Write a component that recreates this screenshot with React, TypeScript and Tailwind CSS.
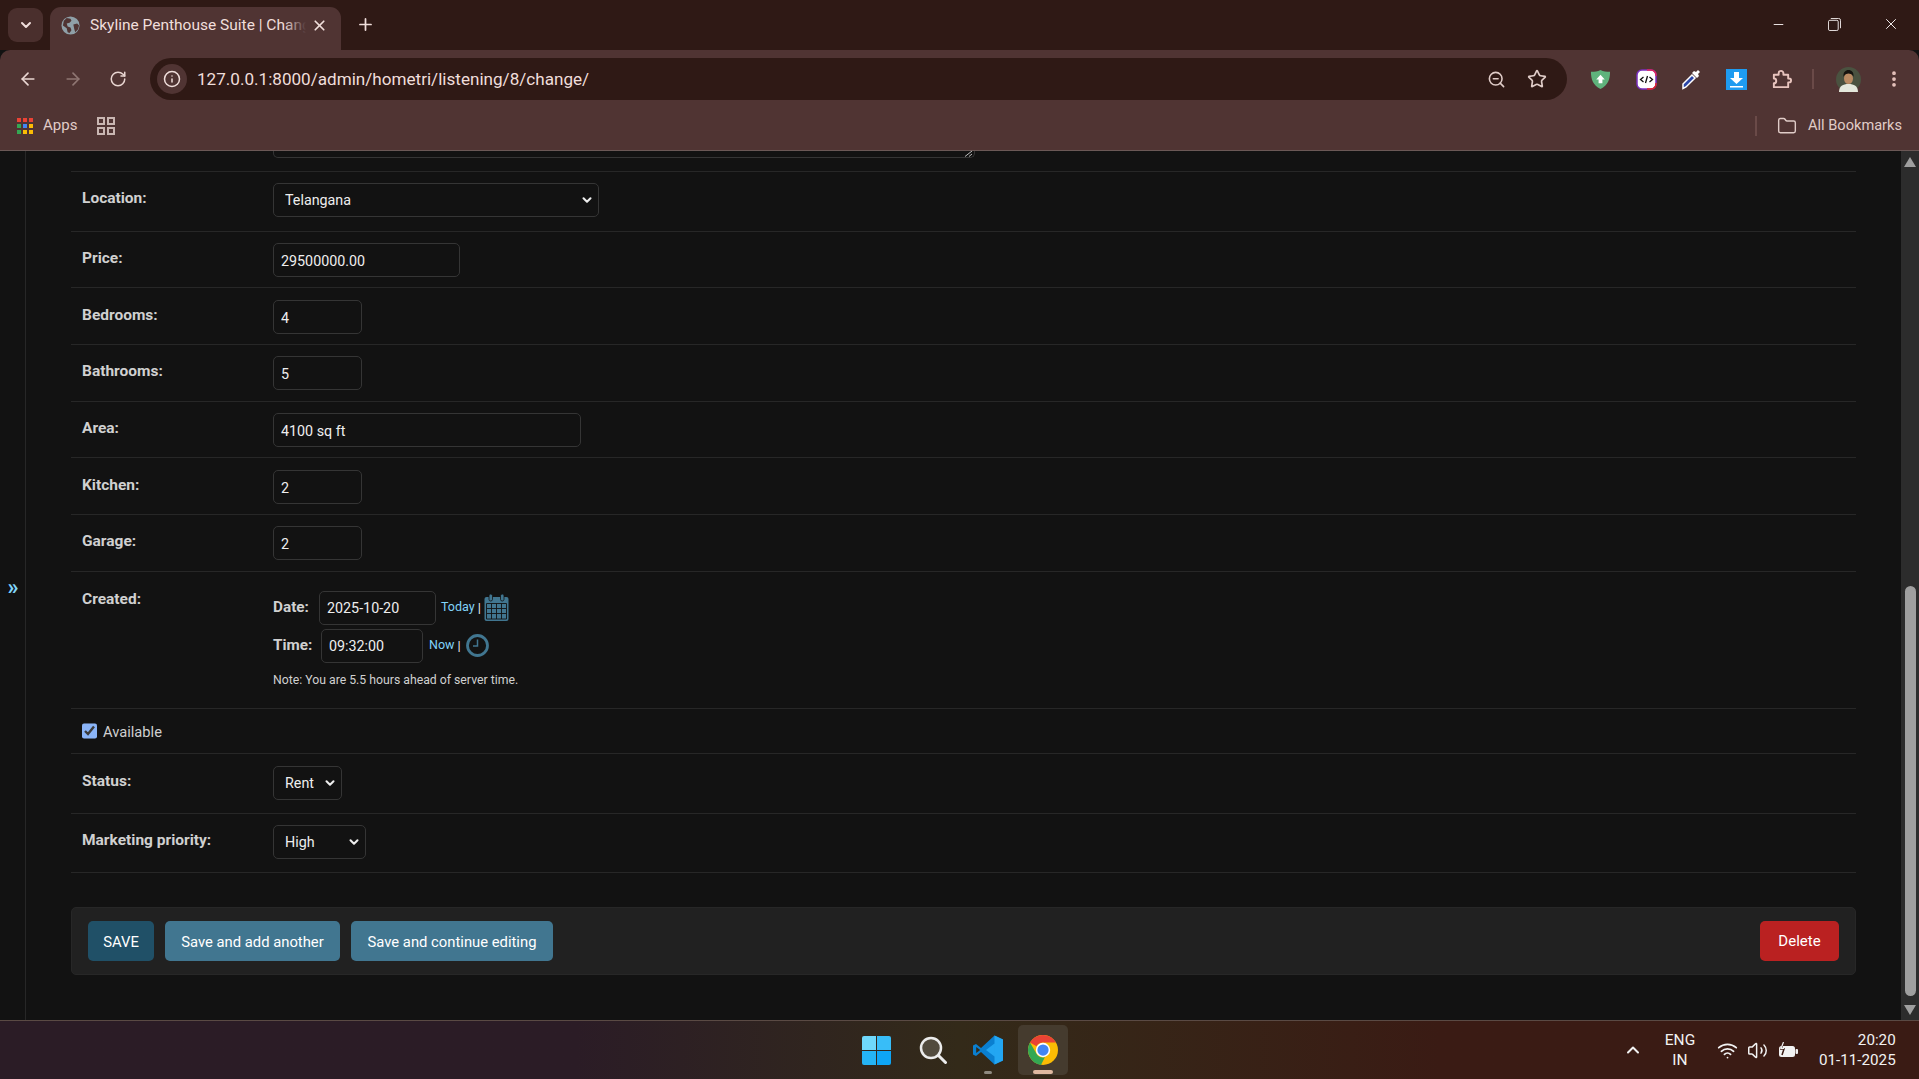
import { ChevronDown, ChevronUp, ArrowLeft, ArrowRight, RotateCw, Info, Star, ZoomOut, Plus, X, Minus, Folder, EllipsisVertical, Wifi, Volume2 } from 'lucide-react';

// --- Browser chrome icons ---
const Globe = () => (
    <svg viewBox="0 0 20 20" className="h-[19px] w-[19px] shrink-0">
        <circle cx="10" cy="10" r="9.5" fill="#8fa0a8" />
        <path d="M6 2l4 1 1 2-2 2-3 1 1 3 3 1 1 3-2 3-2-1-1-4-4-3 1-5zM13 9l4-1 2 2-1 4-3 3-1-3z" fill="#503433" />
    </svg>
);

const AppsGrid = () => {
    const colors = ['#ea4335', '#ea4335', '#ea4335', '#34a853', '#4285f4', '#fbbc04', '#34a853', '#fbbc04', '#fbbc04'];
    return (
        <div className="grid h-[16px] w-[16px] grid-cols-3 gap-[2px]">
            {colors.map((c, i) => (
                <svg key={i} viewBox="0 0 4 4"><rect width="4" height="4" fill={c} /></svg>
            ))}
        </div>
    );
};

const Squares = () => (
    <svg viewBox="0 0 18 18" className="h-[18px] w-[18px]" fill="none" stroke="#c9b6b2" strokeWidth="2">
        <rect x="1" y="1" width="6" height="6" />
        <rect x="11" y="1" width="6" height="6" />
        <rect x="1" y="11" width="6" height="6" />
        <rect x="11" y="11" width="6" height="6" />
    </svg>
);

const Restore = () => (
    <svg viewBox="0 0 14 14" className="h-[13px] w-[13px]" fill="none" stroke="#f4eeee" strokeWidth="1">
        <rect x="0.5" y="2.5" width="10.5" height="11" rx="1.5" />
        <path d="M3 .5h8.5a2 2 0 0 1 2 2V11" />
    </svg>
);

const Shield = () => (
    <svg viewBox="0 0 22 22" className="h-[21px] w-[21px]">
        <path d="M11 1c3 1.500 6 2 10 2 0 8-2 14-10 18C3 17 1 11 1 3c4 0 7-.5 10-2z" fill="#5fb37c" />
        <path d="M11 6l4.500 5H13v4H9v-4H6.500z" fill="#fff" />
    </svg>
);

const DevExt = () => (
    <svg viewBox="0 0 21 21" className="h-[21px] w-[21px]">
        <rect x="1" y="1" width="19" height="19" rx="5" fill="#fff" stroke="#7b2fbf" strokeWidth="1.500" />
        <path d="M11 1h4a5 5 0 0 1 5 5v1" fill="none" stroke="#e0245e" strokeWidth="1.500" />
        <path d="M20 14v1a5 5 0 0 1-5 5h-4" fill="none" stroke="#e02424" strokeWidth="1.500" />
        <path d="M7.500 8L4.500 10.500 7.500 13M13.500 8l3 2.500-3 2.500M11.500 7l-2 7" fill="none" stroke="#111" strokeWidth="1.300" />
    </svg>
);

const Dropper = () => (
    <svg viewBox="0 0 20 21" className="h-[21px] w-[20px]">
        <path d="M2 15L11 6l3 3-9 9-3 1.500z" fill="#2b46a8" stroke="#fff" strokeWidth="1.500" />
        <path d="M11 4l2-2 2 1 2-2 2 2-2 2 1 2-2 2z" fill="#fff" />
    </svg>
);

const DownloadExt = () => (
    <svg viewBox="0 0 21 21" className="h-[21px] w-[21px]">
        <rect width="21" height="21" fill="#1e9bf0" />
        <path d="M8 3h5v6h4l-6.500 6L4 9h4z" fill="#fff" />
        <rect x="4" y="17" width="13" height="1.500" fill="#fff" />
    </svg>
);

const PuzzleIcon = () => (
    <svg viewBox="0 0 22 22" className="h-[21px] w-[21px]" fill="none" stroke="#e8c4be" strokeWidth="2" strokeLinejoin="round">
        <path d="M3 6h5V4.500a2.500 2.500 0 0 1 5 0V6h5v4h1a2 2 0 0 1 0 4h-1v5H3v-4a2.500 2.500 0 0 0 0-5z" />
    </svg>
);

const Avatar = () => (
    <svg viewBox="0 0 25 25" className="h-[25px] w-[25px]">
        <circle cx="12.500" cy="12.500" r="12.500" fill="#4a5240" />
        <path d="M3 25c0-6 4-8 9.500-8s9.500 2 9.500 8z" fill="#e4e8dc" />
        <ellipse cx="12.500" cy="11.500" rx="4.500" ry="5.500" fill="#b98a62" />
        <path d="M7.500 10c-.5-5 2-7 5-7s5.500 2 5 7c-1-3-3-3.500-5-3.500S8.500 7 7.500 10z" fill="#15140f" />
    </svg>
);

// --- Django admin icons ---
const CalendarIcon = () => (
    <svg viewBox="0 0 25 27" className="h-[27px] w-[25px] shrink-0">
        <rect x="0.500" y="3" width="24" height="24" rx="2" fill="#417690" />
        <rect x="5" y="0" width="3.500" height="7" rx="1.700" fill="#417690" stroke="#121212" strokeWidth="0.800" />
        <rect x="16.500" y="0" width="3.500" height="7" rx="1.700" fill="#417690" stroke="#121212" strokeWidth="0.800" />
        <path d="M2.500 9.500h20v15.500h-20zM7.500 9.500v15.500M12.500 9.500v15.500M17.500 9.500v15.500M2.500 14.500h20M2.500 19.500h20" fill="none" stroke="#121212" strokeWidth="0.900" />
    </svg>
);

const ClockIcon = () => (
    <svg viewBox="0 0 23 23" className="h-[23px] w-[23px] shrink-0" fill="none">
        <circle cx="11.500" cy="11.500" r="10" stroke="#417690" strokeWidth="2.800" />
        <path d="M11.500 5.500v6.500H7" stroke="#417690" strokeWidth="1.500" />
    </svg>
);

// --- Taskbar icons ---
const WinLogo = () => (
    <div className="grid h-[29px] w-[29px] grid-cols-2 gap-[1px]">
        <div className="rounded-tl-[2px] bg-[#6fd8fb]" />
        <div className="rounded-tr-[2px] bg-[#38bdf8]" />
        <div className="rounded-bl-[2px] bg-[#25b4f5]" />
        <div className="rounded-br-[2px] bg-[#0ea5f5]" />
    </div>
);

const TaskSearch = () => (
    <svg viewBox="0 0 28 28" className="h-[28px] w-[28px]">
        <circle cx="12" cy="12" r="10" fill="#524b3e" stroke="#ececec" strokeWidth="2.500" />
        <path d="M19.500 19.500L26.500 26.500" stroke="#ececec" strokeWidth="3" strokeLinecap="round" />
    </svg>
);

const VsCode = () => (
    <svg viewBox="0 0 30 30" className="h-[30px] w-[30px]">
        <path d="M21.500 0.500L30 4.500v21l-8.500 4L8 17l-5 4-3-1.500V10.500L3 9l5 4z" fill="#0a7fd0" />
        <path d="M21.500 0.500L30 4.500v21l-8.500 4zM21.500 8.500L13 15l8.500 6.500z" fill="#23a6f2" fillRule="evenodd" />
        <path d="M3.200 12l4 3-4 3z" fill="#332a19" />
    </svg>
);

const ChromeLogo = () => (
    <svg viewBox="0 0 48 48" className="h-[30px] w-[30px]">
        <circle cx="24" cy="24" r="24" fill="#fbbc04" />
        <path d="M24 0a24 24 0 0 1 20.800 12H24a12 12 0 0 0-10.400 6L3.200 12A24 24 0 0 1 24 0z" fill="#ea4335" />
        <path d="M3.200 12l10.400 18A12 12 0 0 0 27 35.500L20.700 47.800A24 24 0 0 1 3.200 12z" fill="#34a853" />
        <circle cx="24" cy="24" r="11.500" fill="#fff" />
        <circle cx="24" cy="24" r="9" fill="#4285f4" />
    </svg>
);

const Battery = () => (
    <svg viewBox="0 0 21 16" className="h-[16px] w-[21px]" fill="none">
        <rect x="1" y="4" width="16" height="11" rx="2.500" fill="#f2f2f2" />
        <rect x="17.500" y="7" width="2.500" height="5" rx="1" fill="#f2f2f2" />
        <path d="M6 0L3 7h3L4 13" stroke="#3a1b14" strokeWidth="1.500" />
        <path d="M5.500 0L3 6.500h3" stroke="#f2f2f2" strokeWidth="1.200" />
    </svg>
);

// --- Form parts ---
const inputClass = "h-[34px] rounded-[5px] border border-[#353535] bg-[#121212] px-[7px] text-[14.300px] text-[#eeeeee] outline-none";

const Row = ({ label, className, children }: { label: string; className: string; children: React.ReactNode }) => (
    <div className={`flex items-start border-b border-[#272727] pl-[11px] ${className}`}>
        <label className="mt-[4px] w-[191px] shrink-0 text-[15.500px] leading-[22px] font-bold text-[#d0d0d0]">{label}</label>
        {children}
    </div>
);

const Select = ({ value, width }: { value: string; width: string }) => (
    <div className={`relative ${width}`}>
        <select defaultValue={value} className="h-[34px] w-full appearance-none rounded-[5px] border border-[#353535] bg-[#121212] pt-[2px] pl-[11px] text-[14.300px] text-[#eeeeee] outline-none">
            <option>{value}</option>
        </select>
        <ChevronDown size={14} strokeWidth={3.5} className="pointer-events-none absolute top-[10px] right-[5px] text-[#eeeeee]" />
    </div>
);

const fields = [
    { label: 'Price:', value: '29500000.00', width: 'w-[187px]' },
    { label: 'Bedrooms:', value: '4', width: 'w-[89px]' },
    { label: 'Bathrooms:', value: '5', width: 'w-[89px]' },
    { label: 'Area:', value: '4100 sq ft', width: 'w-[308px]' },
    { label: 'Kitchen:', value: '2', width: 'w-[89px]' },
    { label: 'Garage:', value: '2', width: 'w-[89px]' },
];

export default function App() {
    return (
        <div className="flex h-[1079px] w-[1919px] flex-col overflow-hidden bg-[#121212] font-['Roboto',sans-serif]">
            {/* Tab strip */}
            <div className="flex h-[50px] shrink-0 items-end bg-[#2f1915] pl-[8px]">
                <div className="mb-[8px] flex h-[34px] w-[35px] items-center justify-center rounded-[9px] bg-[#4a2f2d] text-[#f0dedb]">
                    <ChevronDown size={16} strokeWidth={3} />
                </div>
                <div className="ml-[7px] flex h-[43px] w-[291px] items-center rounded-t-[11px] bg-[#503433] pr-[6px] pb-[7px] pl-[11px]">
                    <Globe />
                    <div className="relative ml-[10px] w-[216px] overflow-hidden pt-[2px]">
                        <div className="text-[15.500px] whitespace-nowrap text-[#f0dedb]">Skyline Penthouse Suite | Change listening</div>
                        <div className="absolute inset-y-0 right-0 w-[22px] bg-linear-to-r from-transparent to-[#503433]" />
                    </div>
                    <X size={17} strokeWidth={2.4} className="ml-[5px] text-[#f0dedb]" />
                </div>
                <div className="mb-[16px] ml-[15px] text-[#f0dedb]"><Plus size={19} strokeWidth={2.2} /></div>
                <div className="mb-[17px] ml-auto flex items-center gap-[41px] pr-[19px] text-[#f4eeee]">
                    <Minus size={15} strokeWidth={1.5} className="mr-[1px]" />
                    <Restore />
                    <X size={18} strokeWidth={1.3} />
                </div>
            </div>

            {/* Toolbar */}
            <div className="flex h-[58px] shrink-0 items-center rounded-t-[10px] bg-[#503433] pl-[18px]">
                <ArrowLeft size={20} strokeWidth={2} className="text-[#e9d6d2]" />
                <ArrowRight size={20} strokeWidth={2} className="ml-[25px] text-[#8f7673]" />
                <RotateCw size={18} strokeWidth={2} className="ml-[26px] text-[#e9d6d2]" />
                <div className="ml-[23px] flex h-[42px] w-[1417px] items-center rounded-full bg-[#2f1915] pr-[20px] pl-[7px]">
                    <div className="flex h-[30px] w-[30px] items-center justify-center rounded-full bg-[#503433]">
                        <Info size={18} strokeWidth={2} className="text-[#f0dedb]" />
                    </div>
                    <span className="ml-[10px] pt-[2px] text-[17.100px] text-[#f0dedb]">127.0.0.1:8000/admin/hometri/listening/8/change/</span>
                    <ZoomOut size={19} strokeWidth={2} className="ml-auto text-[#e0ccc8]" />
                    <Star size={20} strokeWidth={2} className="ml-[21px] text-[#e0ccc8]" />
                </div>
                <div className="ml-[23px] flex items-center gap-[24.500px]">
                    <Shield />
                    <DevExt />
                    <Dropper />
                    <DownloadExt />
                    <PuzzleIcon />
                </div>
                <div className="ml-[20px] h-[20px] w-[2px] bg-[#6a4a48]" />
                <div className="ml-[22px]"><Avatar /></div>
                <EllipsisVertical size={20} strokeWidth={2.5} className="ml-[23px] text-[#e8c4be]" />
            </div>

            {/* Bookmarks bar */}
            <div className="flex h-[43px] shrink-0 items-center border-b border-[#6b5856] bg-[#503433] pb-[7px] pl-[17px]">
                <AppsGrid />
                <span className="ml-[10px] text-[15px] text-[#e0ccc8]">Apps</span>
                <div className="ml-[20px]"><Squares /></div>
                <div className="ml-auto h-[20px] w-[2px] bg-[#6a4a48]" />
                <Folder size={20} strokeWidth={1.7} className="ml-[20px] text-[#e0ccc8]" />
                <span className="mr-[17px] ml-[11px] text-[14.600px] text-[#e0ccc8]">All Bookmarks</span>
            </div>

            {/* Page */}
            <div className="flex min-h-0 flex-1">
                <div className="flex w-[26px] shrink-0 items-center justify-center border-r border-[#272727] text-[22px] font-bold text-[#81d4fa]">
                    <span className="mt-[1px] ml-[1px]">»</span>
                </div>
                <div className="w-[1830px] shrink-0 pl-[45px]">
                    {/* clipped textarea above the fold */}
                    <div className="h-[21px] border-b border-[#272727] pl-[202px]">
                        <div className="relative h-[7px] w-[702px] rounded-b-[5px] border-x border-b border-[#353535]">
                            <svg viewBox="0 0 8 6" className="absolute right-[1px] bottom-[0px] h-[6px] w-[8px]"><path d="M0 5.500L7 0M4 5.500L7 3" stroke="#bdbdbd" strokeWidth="1" /></svg>
                        </div>
                    </div>
                    <Row label="Location:" className="h-[59.670px] pt-[11px]">
                        <Select value="Telangana" width="w-[326px]" />
                    </Row>
                    {fields.map((f) => (
                        <Row key={f.label} label={f.label} className="h-[56.670px] pt-[11.500px]">
                            <input readOnly defaultValue={f.value} className={`${inputClass} h-[33.500px] ${f.width} pt-[2px]`} />
                        </Row>
                    ))}
                    <div className="flex h-[137px] items-start border-b border-[#272727] pt-[16px] pl-[11px]">
                        <label className="w-[191px] shrink-0 text-[15.500px] leading-[22px] font-bold text-[#d0d0d0]">Created:</label>
                        <div className="flex flex-col">
                            <div className="mt-[3px] flex items-center">
                                <span className="w-[46px] text-[15.300px] font-bold text-[#d0d0d0]">Date:</span>
                                <input readOnly defaultValue="2025-10-20" className={`${inputClass} w-[117px]`} />
                                <a className="ml-[5px] text-[12.500px] text-[#81d4fa]">Today</a>
                                <span className="mr-[3px] ml-[3px] text-[13px] text-[#eeeeee]">|</span>
                                <CalendarIcon />
                            </div>
                            <div className="mt-[4px] flex items-center">
                                <span className="w-[48px] text-[15.300px] font-bold text-[#d0d0d0]">Time:</span>
                                <input readOnly defaultValue="09:32:00" className={`${inputClass} w-[102px]`} />
                                <a className="ml-[6px] text-[12.500px] text-[#81d4fa]">Now</a>
                                <span className="mr-[5px] ml-[3px] text-[13px] text-[#eeeeee]">|</span>
                                <ClockIcon />
                            </div>
                            <p className="mt-[8px] text-[12.250px] text-[#d0d0d0]">Note: You are 5.5 hours ahead of server time.</p>
                        </div>
                    </div>
                    <div className="flex h-[45px] items-center border-b border-[#272727] pt-[1px] pl-[11px]">
                        <input type="checkbox" defaultChecked readOnly className="h-[16px] w-[15px] accent-[#8ab4f8]" />
                        <span className="mt-[1px] ml-[6px] text-[14.700px] text-[#d0d0d0]">Available</span>
                    </div>
                    <Row label="Status:" className="h-[60px] pt-[12px]">
                        <Select value="Rent" width="w-[69px]" />
                    </Row>
                    <Row label="Marketing priority:" className="h-[59px] pt-[11px]">
                        <Select value="High" width="w-[93px]" />
                    </Row>
                    {/* Submit row */}
                    <div className="mt-[34px] flex h-[68px] items-center gap-[11px] rounded-[5px] border border-[#272727] bg-[#212121] pr-[16px] pl-[16px]">
                        <button className="h-[40px] w-[66px] rounded-[5px] bg-[#205067] pt-[2px] text-[14.800px] text-white">SAVE</button>
                        <button className="h-[40px] w-[175px] rounded-[5px] bg-[#417690] pt-[2px] text-[14.800px] text-white">Save and add another</button>
                        <button className="h-[40px] w-[202px] rounded-[5px] bg-[#417690] pt-[2px] text-[14.800px] text-white">Save and continue editing</button>
                        <button className="ml-auto h-[40px] w-[79px] rounded-[5px] bg-[#ba2121] pt-[2px] text-[15px] text-white">Delete</button>
                    </div>
                </div>
                {/* Scrollbar */}
                <div className="ml-auto flex w-[18px] shrink-0 flex-col items-center bg-[#2c2c2c] pt-[6px] pb-[5px]">
                    <div className="h-0 w-0 border-x-[6px] border-b-[10px] border-x-transparent border-b-[#9f9f9f]" />
                    <div className="mt-[419px] h-[410px] w-[11px] rounded-full bg-[#9f9f9f]" />
                    <div className="mt-auto h-0 w-0 border-x-[6px] border-t-[10px] border-x-transparent border-t-[#9f9f9f]" />
                </div>
            </div>

            {/* Windows taskbar */}
            <div className="relative flex h-[59px] shrink-0 items-center border-t border-[#5a4a44] bg-linear-to-r from-[#2b1c26] from-30% via-[#332a19] via-50% to-[#3a1b14] to-75%">
                <div className="ml-[862px]"><WinLogo /></div>
                <div className="ml-[28px]"><TaskSearch /></div>
                <div className="relative ml-[26px]">
                    <VsCode />
                    <div className="absolute top-[36px] left-[11px] h-[3px] w-[8px] rounded-full bg-[#8f8a80]" />
                </div>
                <div className="relative ml-[15px] flex h-[50px] w-[50px] items-center justify-center rounded-[5px] bg-[#453b2e]">
                    <ChromeLogo />
                    <div className="absolute bottom-[1px] left-[15px] h-[4px] w-[20px] rounded-full bg-[#e0b8a0]" />
                </div>
                <ChevronUp size={20} strokeWidth={2.4} className="ml-[555px] text-[#f2f2f2]" />
                <div className="ml-[16px] w-[42px] text-center text-[15.500px] leading-[20px] text-[#f2f2f2]">ENG<br />IN</div>
                <Wifi size={21} strokeWidth={2} className="ml-[16px] text-[#f2f2f2]" />
                <Volume2 size={21} strokeWidth={1.7} className="ml-[9px] text-[#f2f2f2]" />
                <div className="ml-[10px]"><Battery /></div>
                <div className="ml-[20px] text-right text-[15.200px] leading-[20px] text-[#f2f2f2]">20:20<br />01-11-2025</div>
            </div>
        </div>
    );
}
